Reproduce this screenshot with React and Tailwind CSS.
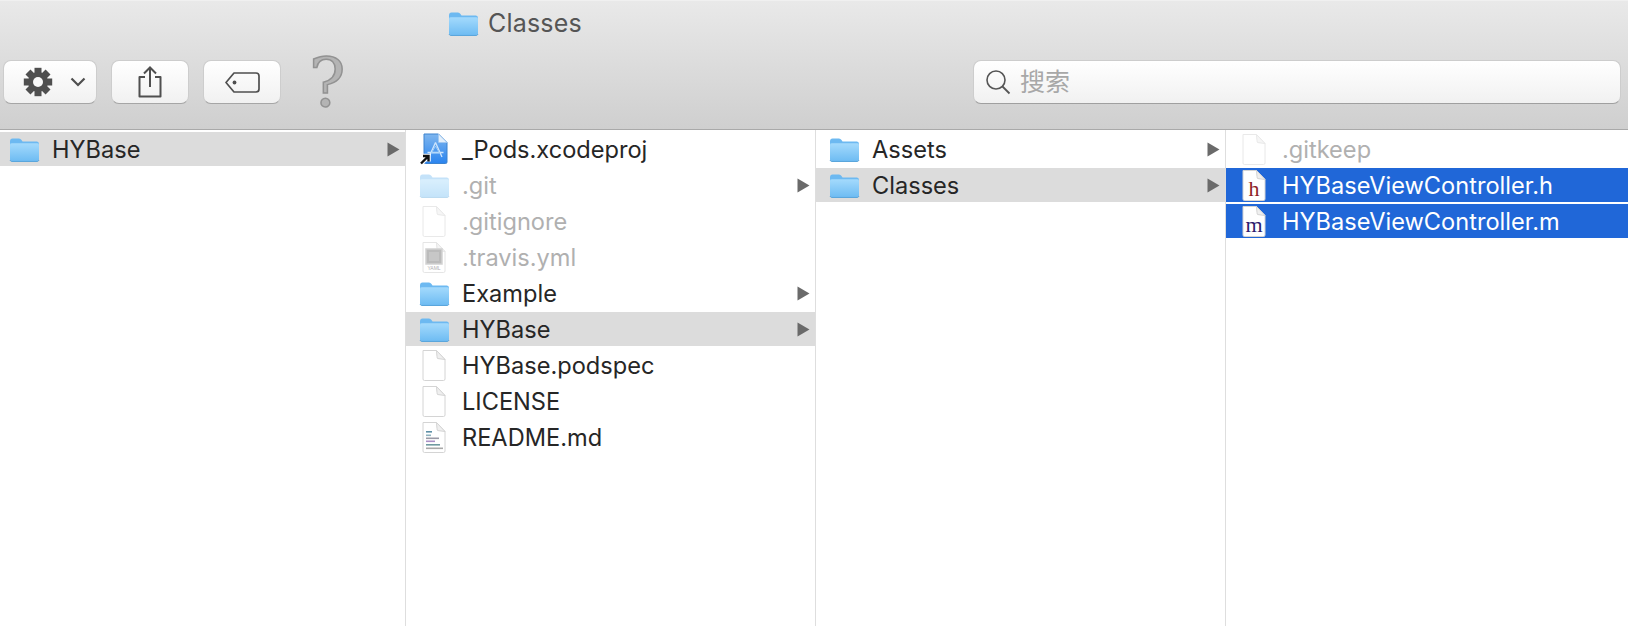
import React from "react";

const FONT = "font-['Inter','Noto_Sans_CJK_SC',sans-serif]";

function Folder({ dim, uid }) {
  return (
    <svg width="31" height="25" viewBox="0 0 31 25" className={`shrink-0 ${dim ? "opacity-40" : ""}`}>
      <defs>
        <linearGradient id={uid} x1="0" y1="0" x2="0" y2="1">
          <stop offset="0" stopColor="#a4dafc" />
          <stop offset="1" stopColor="#70bdf3" />
        </linearGradient>
      </defs>
      <path d="M1 4.5 Q1 1.5 3.5 1.5 H10 Q11.5 1.5 12.5 3 L13.5 4.5 H28 Q30 4.5 30 7 V22 Q30 24 28 24 H3 Q1 24 1 22 Z" fill="#6db9f1" />
      <path d="M1 7.5 Q1 6.2 3 6.2 H28 Q30 6.2 30 7.5 V22 Q30 23.4 28 23.4 H3 Q1 23.4 1 22 Z" fill={`url(#${uid})`} />
      <path d="M1 23 Q1.5 24.5 3 24.5 H28 Q29.5 24.5 30 23" fill="none" stroke="#5aa6dc" strokeWidth="1" />
    </svg>
  );
}

function Doc({ dim, children }) {
  return (
    <svg width="24" height="31" viewBox="0 0 24 31" className={`shrink-0 ${dim ? "opacity-50" : ""}`}>
      <path d="M1 .5 H14.5 L23 9.5 V29 Q23 30.5 21.5 30.5 H2.5 Q1 30.5 1 29 Z" fill="#fff" stroke="#d4d4d4" />
      <path d="M14.5 .5 Q15 8.5 15.5 8.5 L23 9.5 Z" fill="#efefef" stroke="#d4d4d4" />
      {children}
    </svg>
  );
}

function XcodeProj() {
  return (
    <svg width="30" height="32" viewBox="0 0 30 32" className="shrink-0">
      <defs>
        <linearGradient id="xc" x1="0" y1="0" x2="0" y2="1">
          <stop offset="0" stopColor="#7fb6ee" />
          <stop offset="1" stopColor="#2a84ef" />
        </linearGradient>
      </defs>
      <path d="M5 1 H19.5 L28 9.5 V29 Q28 30.5 26.5 30.5 H6.5 Q5 30.5 5 29 Z" fill="url(#xc)" stroke="#3c83cf" />
      <path d="M19.5 1 V9.5 H28 Z" fill="#e3effb" stroke="#9fc6ee" strokeWidth="0.6" />
      <path d="M16.5 9.5 L10 24 M16.5 9.5 L23 24 M8.5 19.5 H24.5" stroke="#cfe5fc" strokeWidth="1.3" fill="none" />
      <path d="M16.5 13 L12.5 20 H20.5 Z" fill="none" stroke="#9bccf9" strokeWidth="1" />
      <path d="M2 30.5 L8.5 24 M4 23 H9.5 V28.5" stroke="#fff" strokeWidth="4.5" fill="none" />
      <path d="M2 30.5 L8.5 24 M4 23 H9.5 V28.5" stroke="#111" strokeWidth="2.4" fill="none" />
    </svg>
  );
}

function Yaml() {
  return (
    <Doc>
      <rect x="4" y="7" width="16" height="15" fill="#8e8e8e" stroke="#b5b5b5" strokeWidth="1.5" />
      <rect x="7" y="10" width="10" height="9" fill="#a2a2a2" />
      <text x="12" y="28" textAnchor="middle" fontSize="5" fill="#777" fontFamily="Liberation Sans">YAML</text>
    </Doc>
  );
}

function Markdown() {
  return (
    <Doc>
      <rect x="4" y="9" width="6" height="1.6" fill="#5d8fa6" />
      <rect x="4" y="12.5" width="5" height="1.6" fill="#8db1bd" />
      <rect x="4" y="15.5" width="13" height="1.6" fill="#9a9aa6" />
      <rect x="4" y="18.5" width="9" height="1.6" fill="#a98fc6" />
      <rect x="4" y="22" width="14" height="1.6" fill="#6f9aa0" />
      <rect x="4" y="25.5" width="17" height="1.6" fill="#a8a8a8" />
    </Doc>
  );
}

function Arrow() {
  return (
    <svg width="13" height="15" viewBox="0 0 13 15" className="shrink-0">
      <path d="M0.5 0.5 L12.5 7.5 L0.5 14.5 Z" fill="#6a6a6a" />
    </svg>
  );
}

function Row({ icon, label, color = "text-[#262626]", selected, blue, arrow, iconBox, textLeft, arrowRight }) {
  const bg = blue ? "bg-[#2067d8]" : selected ? "bg-[#dcdcdc]" : "";
  const fg = blue ? "text-white" : color;
  return (
    <div className={`h-[34px] mb-[2px] flex items-center ${bg}`}>
      <div className={`flex items-center justify-center shrink-0 ${iconBox}`}>{icon}</div>
      <span className={`pt-[2px] text-[23.6px] leading-none whitespace-nowrap ${fg} ${textLeft}`}>{label}</span>
      {arrow && <div className={`ml-auto ${arrowRight}`}><Arrow /></div>}
    </div>
  );
}

function ToolButton({ className, children }) {
  return (
    <div className={`h-[44px] rounded-[8px] bg-gradient-to-b from-[#ffffff] to-[#f1f1f1] border border-[#cdcdcd] border-b-[#a6a6a6] flex items-center ${className}`}>
      {children}
    </div>
  );
}

function Gear() {
  const teeth = [0, 45, 90, 135];
  return (
    <svg width="30" height="30" viewBox="0 0 30 30">
      {teeth.map((a) => (
        <rect key={a} x="11.5" y="0.8" width="7" height="28.4" fill="#4f4f4f" transform={`rotate(${a} 15 15)`} />
      ))}
      <circle cx="15" cy="15" r="10" fill="#4f4f4f" />
      <circle cx="15" cy="15" r="5" fill="#f8f8f8" />
    </svg>
  );
}

export default function App() {
  const p1 = { iconBox: "w-[40px] pl-[8px]", textLeft: "ml-[12px]", arrowRight: "mr-[5px]" };
  const p2 = { iconBox: "w-[44px] pl-[12px]", textLeft: "ml-[12px]", arrowRight: "mr-[5px]" };
  const p3 = { iconBox: "w-[44px] pl-[12px]", textLeft: "ml-[12px]", arrowRight: "mr-[5px]" };
  const p4 = { iconBox: "w-[44px] pl-[12px]", textLeft: "ml-[12px]" };
  const grey = "text-[#b0b0b0]";
  return (
    <div className={`w-[1628px] h-[626px] bg-white overflow-hidden flex flex-col ${FONT}`}>
      <header className="h-[130px] shrink-0 border-t border-t-[#f0f0f0] border-b border-b-[#a9a9a9] bg-gradient-to-b from-[#e9e9e9] to-[#cfcfcf]">
        <div className="h-[45px] pl-[448px] flex items-center gap-[9px]">
          <Folder uid="ft" />
          <span className="text-[25px] leading-none tracking-[0.2px] text-[#555]">Classes</span>
        </div>
        <div className="mt-[14px] pl-[3px] pr-[7px] flex items-start gap-[14px]">
          <ToolButton className="w-[94px] pl-[19px] gap-[17px]">
            <Gear />
            <svg width="16" height="10" viewBox="0 0 16 10">
              <path d="M1.5 1.5 L8 8 L14.5 1.5" fill="none" stroke="#4f4f4f" strokeWidth="2.2" />
            </svg>
          </ToolButton>
          <ToolButton className="w-[78px] justify-center">
            <svg width="24" height="32" viewBox="0 0 24 32">
              <path d="M7 11 H1.5 V30.5 H22.5 V11 H17" fill="none" stroke="#4f4f4f" strokeWidth="2" strokeLinejoin="round" />
              <path d="M12 21 V2 M6 7.5 L12 1.5 L18 7.5" fill="none" stroke="#4f4f4f" strokeWidth="2" />
            </svg>
          </ToolButton>
          <ToolButton className="w-[78px] justify-center">
            <svg width="35" height="21" viewBox="0 0 35 21">
              <path d="M9 1 H31 Q34 1 34 4 V17 Q34 20 31 20 H9 L1 10.5 Z" fill="none" stroke="#4f4f4f" strokeWidth="1.7" strokeLinejoin="round" />
              <circle cx="9.5" cy="10.5" r="1.9" fill="#4f4f4f" />
            </svg>
          </ToolButton>
          <span className="ml-[14px] -mt-[16px] h-[60px] text-[68px] leading-[78px] text-[#b4b4b4] font-['DejaVu_Serif',serif] [-webkit-text-stroke:1.5px_#929292]">?</span>
          <div className="ml-auto w-[648px] h-[44px] rounded-[8px] bg-gradient-to-b from-[#ffffff] to-[#f1f1f1] border border-[#cdcdcd] border-b-[#a0a0a0] flex items-center pl-[11px]">
            <svg width="26" height="26" viewBox="0 0 26 26">
              <circle cx="11" cy="11" r="9" fill="none" stroke="#555" strokeWidth="1.6" />
              <path d="M17.5 17.5 L24.5 24.5" stroke="#555" strokeWidth="1.8" />
            </svg>
            <span className="ml-[9px] text-[25px] leading-none text-[#a8a8a8]">搜索</span>
          </div>
        </div>
      </header>
      <main className="flex-1 flex">
        <section className="w-[406px] pt-[2px] border-r border-r-[#dedede] shrink-0">
          <Row {...p1} selected arrow icon={<Folder uid="c1a" />} label="HYBase" />
        </section>
        <section className="w-[410px] pt-[2px] border-r border-r-[#dedede] shrink-0">
          <Row {...p2} icon={<XcodeProj />} label="_Pods.xcodeproj" />
          <Row {...p2} arrow icon={<Folder dim uid="c2b" />} label=".git" color={grey} />
          <Row {...p2} icon={<Doc dim />} label=".gitignore" color={grey} />
          <Row {...p2} icon={<div className="opacity-60"><Yaml /></div>} label=".travis.yml" color={grey} />
          <Row {...p2} arrow icon={<Folder uid="c2e" />} label="Example" />
          <Row {...p2} selected arrow icon={<Folder uid="c2f" />} label="HYBase" />
          <Row {...p2} icon={<Doc />} label="HYBase.podspec" />
          <Row {...p2} icon={<Doc />} label="LICENSE" />
          <Row {...p2} icon={<Markdown />} label="README.md" />
        </section>
        <section className="w-[410px] pt-[2px] border-r border-r-[#dedede] shrink-0">
          <Row {...p3} arrow icon={<Folder uid="c3a" />} label="Assets" />
          <Row {...p3} selected arrow icon={<Folder uid="c3b" />} label="Classes" />
        </section>
        <section className="flex-1 pt-[2px]">
          <Row {...p4} icon={<Doc dim />} label=".gitkeep" color={grey} />
          <Row {...p4} blue icon={<Doc><text x="12" y="26" textAnchor="middle" fontSize="22" fill="#8f1f2a" fontFamily="Liberation Serif">h</text></Doc>} label="HYBaseViewController.h" />
          <Row {...p4} blue icon={<Doc><text x="12" y="26" textAnchor="middle" fontSize="22" fill="#2b1a6e" fontFamily="Liberation Serif">m</text></Doc>} label="HYBaseViewController.m" />
        </section>
      </main>
    </div>
  );
}
